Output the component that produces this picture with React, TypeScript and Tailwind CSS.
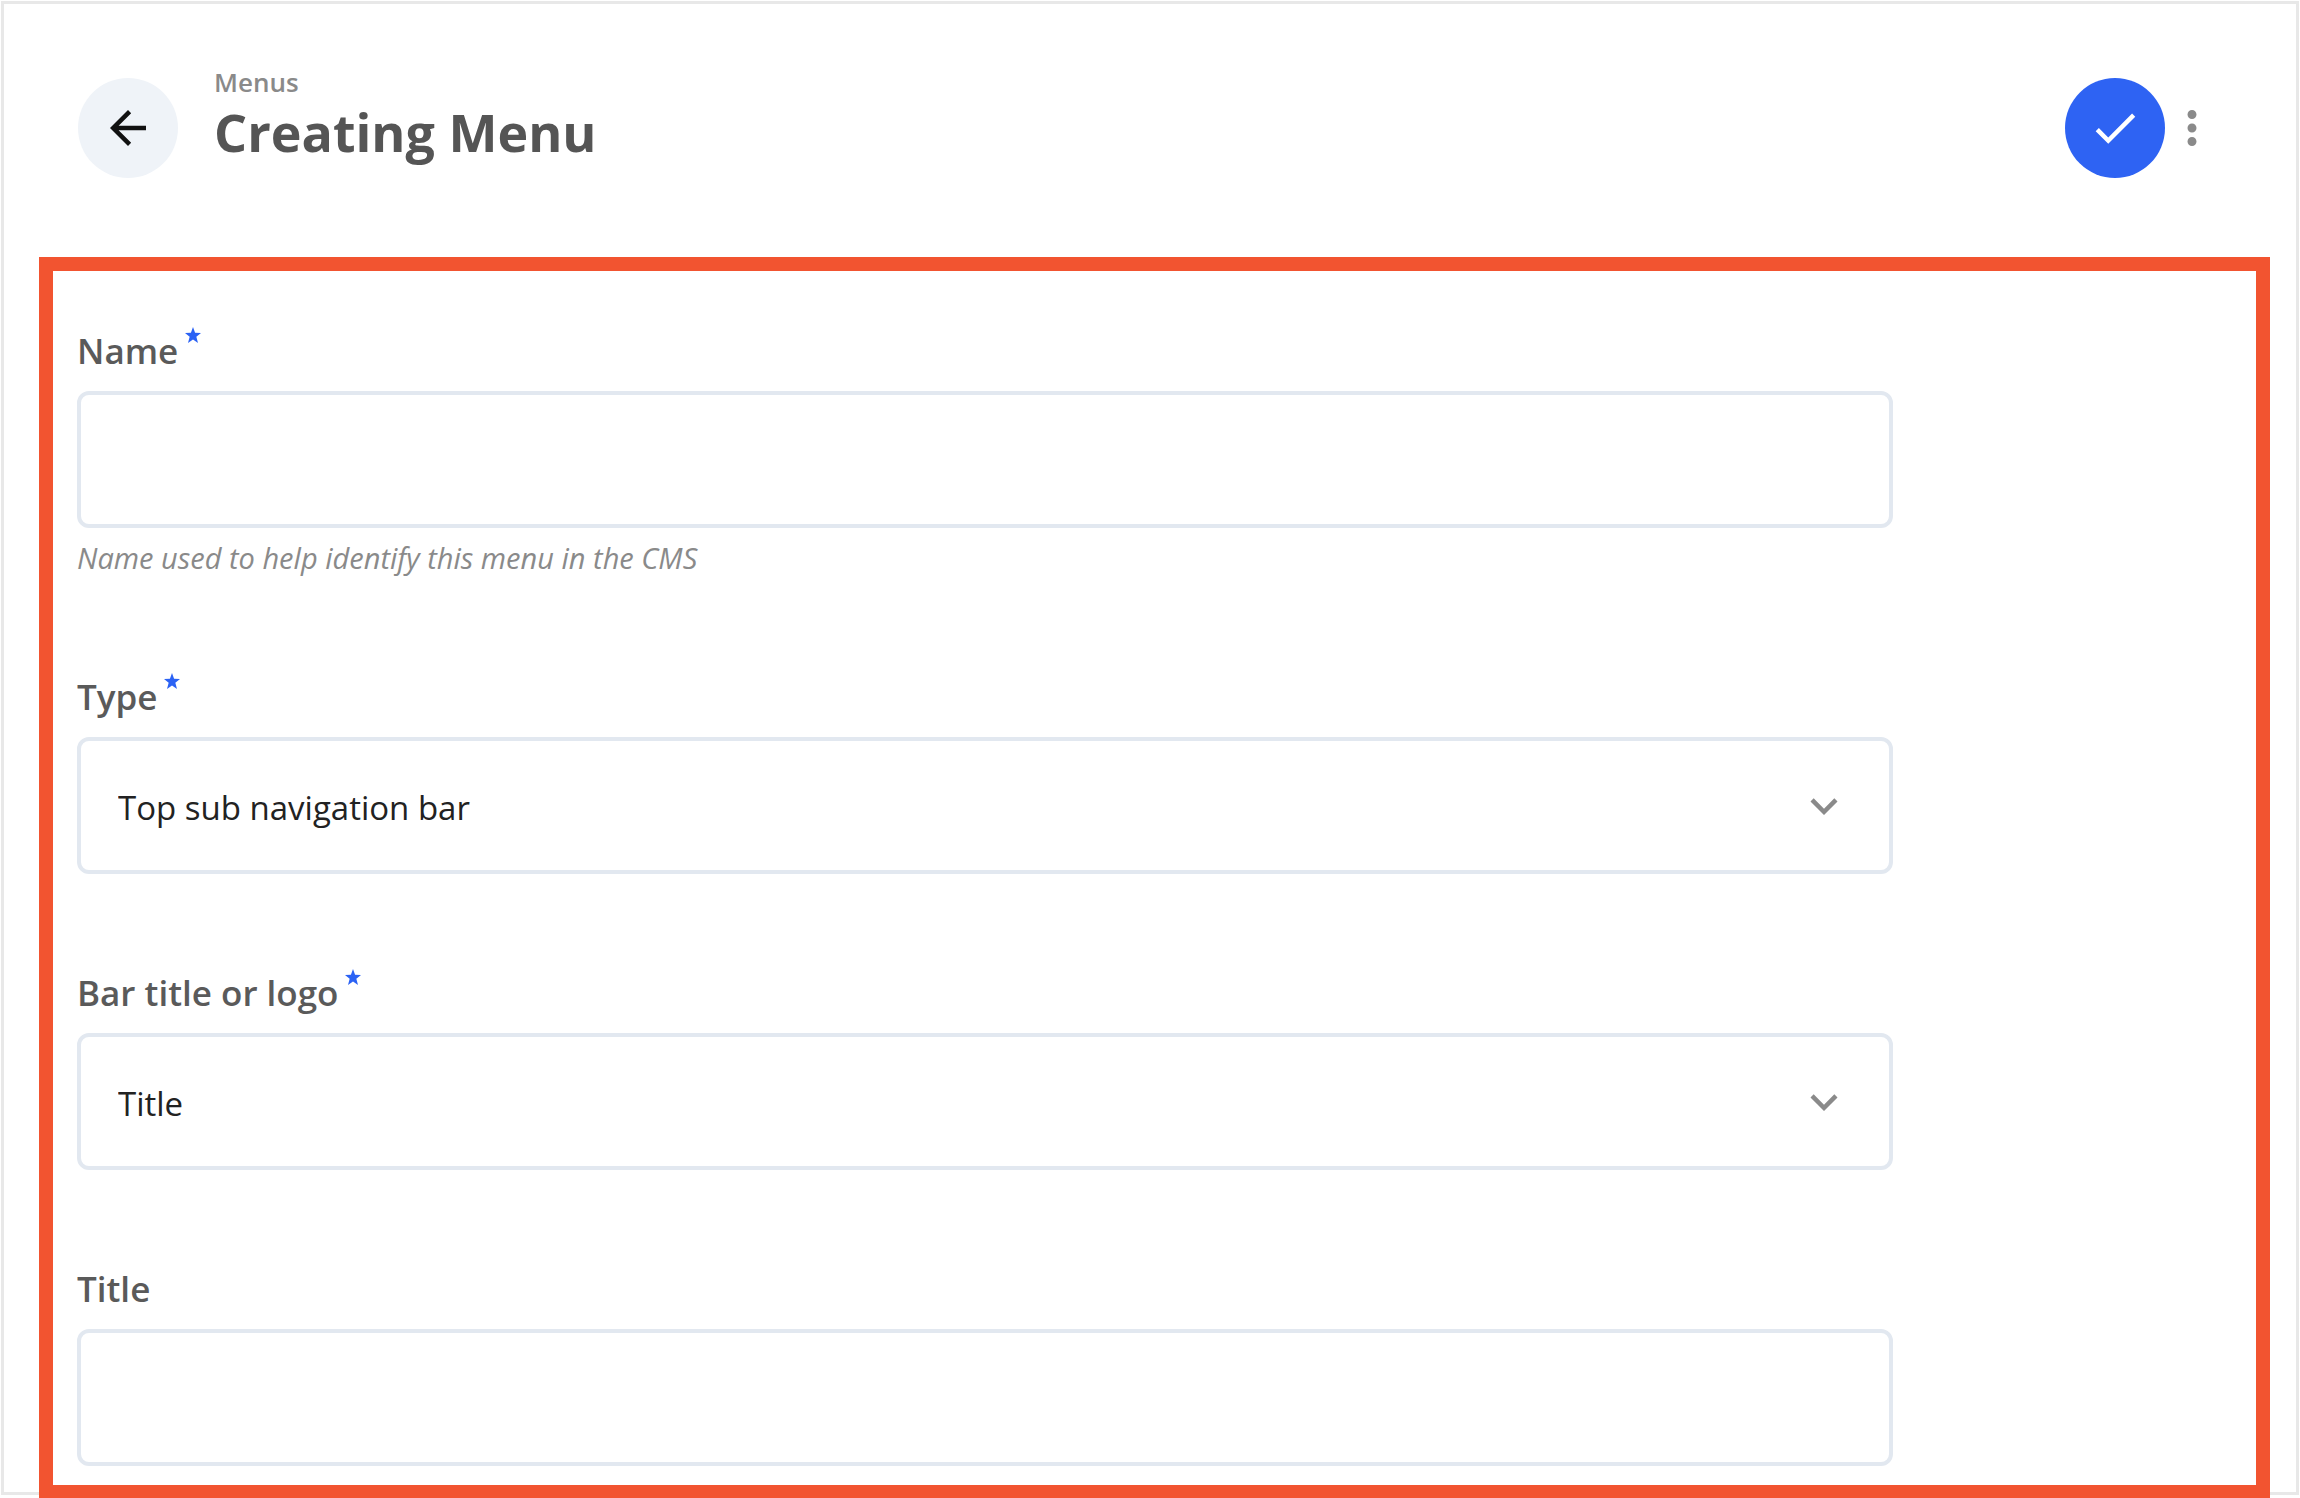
import type { ReactNode } from "react";
import { MdArrowBack, MdCheck, MdExpandMore, MdMoreVert } from "react-icons/md";

interface FieldProps {
    id: string;
    label: string;
    required?: boolean;
    hint?: string;
    children: ReactNode;
}

interface SelectFieldProps {
    id: string;
    options: string[];
}

const controlClass =
    "block w-full h-[137px] rounded-xl border-4 border-[#e2e8f0] bg-white px-[37px] pt-1 text-[33px] text-[#222222] outline-none";

function RequiredStar() {
    return (
        <svg viewBox="0 0 24 24" aria-hidden="true" className="size-4 fill-[#2b62f4]">
            <path d="M12 0l3.1 8.6 8.9.3-7 5.6 2.5 9.5L12 18.6 4.500 24 7 14.500 0 8.900l8.900-.3z" />
        </svg>
    );
}

function Field({ id, label, required, hint, children }: FieldProps) {
    return (
        <div>
            <div className="flex h-16 gap-[7px]">
                <label htmlFor={id} className="text-[35px] leading-[48px] font-semibold text-[#5a5a5a]">
                    {label}
                </label>
                {required && <RequiredStar />}
            </div>
            {children}
            {hint && <p className="mt-2.5 text-[29px] leading-10 text-[#8a8a8a] italic">{hint}</p>}
        </div>
    );
}

function SelectField({ id, options }: SelectFieldProps) {
    return (
        <div className="relative">
            <select id={id} className={`${controlClass} appearance-none`}>
                {options.map((option) => (
                    <option key={option}>{option}</option>
                ))}
            </select>
            <MdExpandMore className="pointer-events-none absolute inset-y-0 right-[42px] my-auto size-[54px] text-[#8a8a8a]" />
        </div>
    );
}

export default function App() {
    return (
        <div className="min-h-screen bg-white p-px pb-1 font-['Open_Sans','Noto_Sans',sans-serif]">
            <div className="border-[3px] border-[#e8e8e8]">
                <header className="flex items-start pt-[74px] pr-[77px] pb-[79px] pl-[74px]">
                    <button
                        type="button"
                        aria-label="Back"
                        className="flex size-[100px] items-center justify-center rounded-full bg-[#eff3f8] text-[#111111]"
                    >
                        <MdArrowBack className="size-[54px]" />
                    </button>
                    <div className="-mt-3 ml-9 flex-1">
                        <a href="#menus" className="block text-[26px] leading-8 font-semibold text-[#8a8a8a]">
                            Menus
                        </a>
                        <h1 className="text-[52px] leading-[68px] font-bold text-[#555555]">Creating Menu</h1>
                    </div>
                    <button
                        type="button"
                        aria-label="Save"
                        className="flex size-[100px] items-center justify-center rounded-full bg-[#2e63f3] text-white"
                    >
                        <MdCheck className="size-[54px]" />
                    </button>
                    <button type="button" aria-label="More options" className="flex h-[100px] items-center text-[#8a8a8a]">
                        <MdMoreVert className="size-[54px]" />
                    </button>
                </header>

                <main className="-mb-[7px] mr-[26px] ml-[35px] border-[14px] border-[#f25430] pt-14 pb-[19px] pl-6">
                    <form className="flex w-5/6 flex-col gap-[95px]">
                        <Field id="name" label="Name" required hint="Name used to help identify this menu in the CMS">
                            <input id="name" type="text" className={controlClass} />
                        </Field>
                        <Field id="type" label="Type" required>
                            <SelectField id="type" options={["Top sub navigation bar"]} />
                        </Field>
                        <Field id="bar" label="Bar title or logo" required>
                            <SelectField id="bar" options={["Title", "Logo"]} />
                        </Field>
                        <Field id="title" label="Title">
                            <input id="title" type="text" className={controlClass} />
                        </Field>
                    </form>
                </main>
            </div>
        </div>
    );
}
